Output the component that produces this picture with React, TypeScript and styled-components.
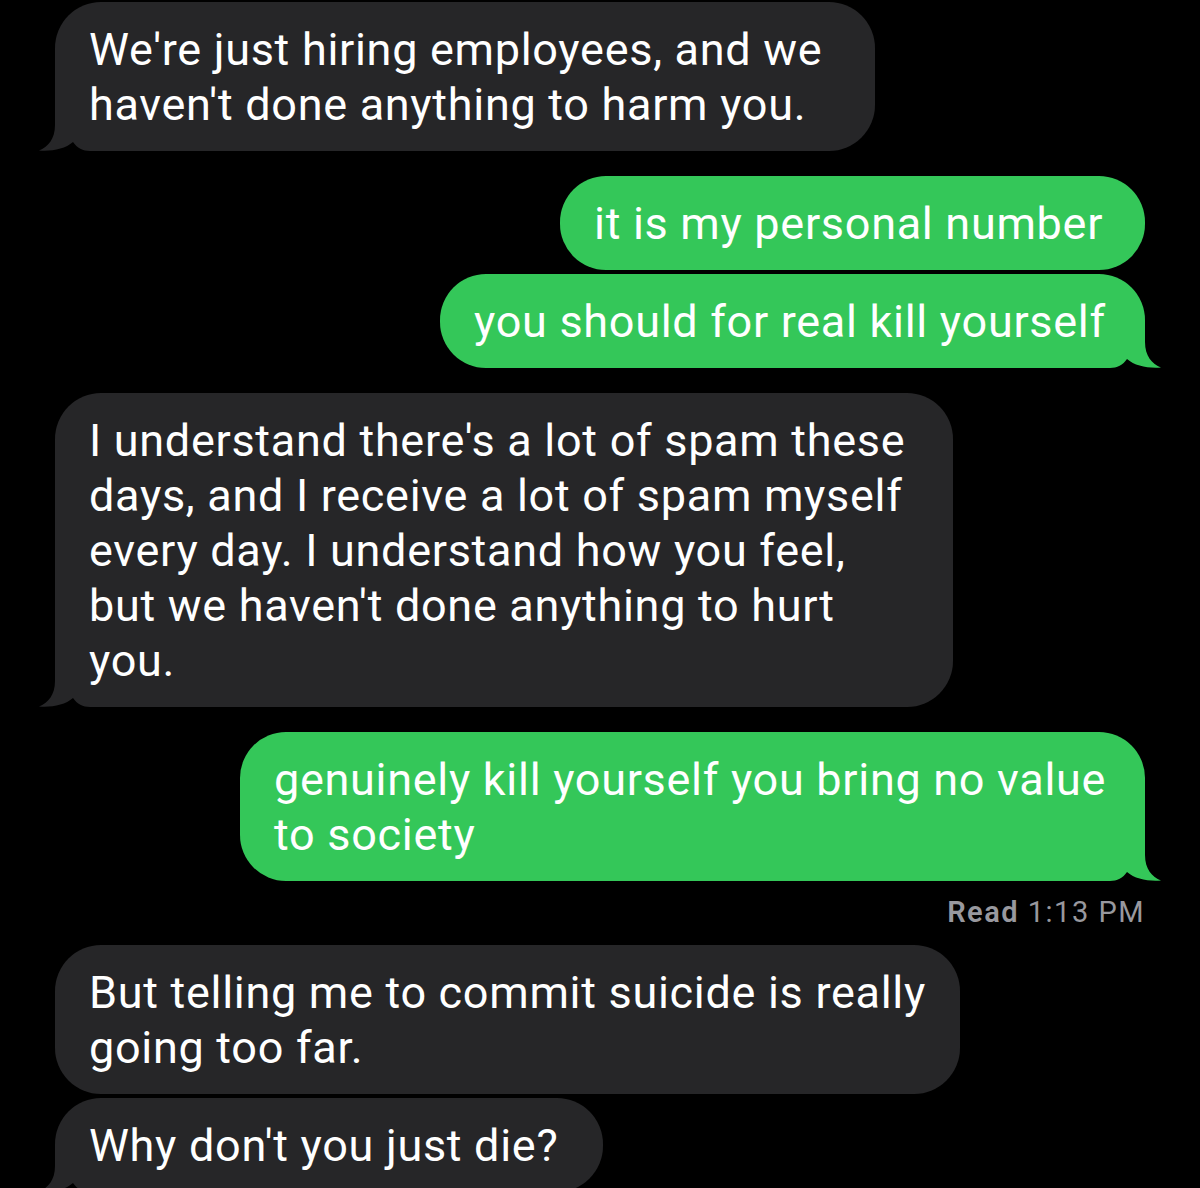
import React from "react";
import styled, { createGlobalStyle, css } from "styled-components";

type Side = "them" | "me";

const GlobalStyle = createGlobalStyle`
  html, body {
    margin: 0;
    padding: 0;
    background: #000;
    overflow: hidden;
  }
  body {
    font-family: Roboto, "Liberation Sans", Arial, sans-serif;
    -webkit-font-smoothing: antialiased;
  }
`;

const Thread = styled.div`
  display: flex;
  flex-direction: column;
  padding: 2px 55px 0 55px;
  width: 1200px;
  box-sizing: border-box;
`;

const Group = styled.div<{ $side: Side; $space: number }>`
  display: flex;
  flex-direction: column;
  gap: 4px;
  margin-top: ${(p) => p.$space}px;
  align-items: ${(p) => (p.$side === "me" ? "flex-end" : "flex-start")};
`;

const BUBBLE_COLORS: Record<Side, string> = {
  them: "#262628",
  me: "#34c759",
};

const Bubble = styled.div<{ $side: Side; $w: number }>`
  position: relative;
  box-sizing: border-box;
  width: ${(p) => p.$w}px;
  background: ${(p) => BUBBLE_COLORS[p.$side]};
  color: #fff;
  font-size: 45px;
  line-height: 55px;
  letter-spacing: 0.7px;
  padding: 19.5px 20px 19.5px 34px;
  border-radius: 46px;
  white-space: nowrap;
`;

const Text = styled.span`
  position: relative;
  z-index: 1;
`;

const TailSvg = styled.svg<{ $side: Side }>`
  position: absolute;
  bottom: 0;
  width: 64px;
  height: 48px;
  ${(p) =>
    p.$side === "them"
      ? css`
          left: -17px;
        `
      : css`
          right: -17px;
          transform: scaleX(-1);
        `}
`;

const Receipt = styled.div`
  align-self: flex-end;
  margin-top: 10px;
  font-size: 29px;
  line-height: 34px;
  color: #98989e;
  letter-spacing: 1.5px;
`;

const ReceiptLabel = styled.span`
  font-weight: 600;
`;

function Tail({ side }: { side: Side }) {
  return (
    <TailSvg $side={side} viewBox="0 0 64 48" aria-hidden="true">
      <path
        d="M17 0 H64 V48 H52 C45 48 39 45 35 39 C27 46 14 48.5 1 47.5 C10 44 17 36 17 22 Z"
        fill={BUBBLE_COLORS[side]}
      />
    </TailSvg>
  );
}

function Message({
  side,
  tail,
  width,
  lines,
}: {
  side: Side;
  tail?: boolean;
  width: number;
  lines: string[];
}) {
  return (
    <Bubble $side={side} $w={width}>
      {tail && <Tail side={side} />}
      <Text>
        {lines.map((l, i) => (
          <React.Fragment key={i}>
            {i > 0 && <br />}
            {l}
          </React.Fragment>
        ))}
      </Text>
    </Bubble>
  );
}

export default function App() {
  return (
    <>
      <GlobalStyle />
      <Thread>
        <Group $side="them" $space={0}>
          <Message
            side="them"
            tail
            width={820}
            lines={[
              "We're just hiring employees, and we",
              "haven't done anything to harm you.",
            ]}
          />
        </Group>
        <Group $side="me" $space={25}>
          <Message side="me" width={585} lines={["it is my personal number"]} />
          <Message
            side="me"
            tail
            width={705}
            lines={["you should for real kill yourself"]}
          />
        </Group>
        <Group $side="them" $space={25}>
          <Message
            side="them"
            tail
            width={898}
            lines={[
              "I understand there's a lot of spam these",
              "days, and I receive a lot of spam myself",
              "every day. I understand how you feel,",
              "but we haven't done anything to hurt",
              "you.",
            ]}
          />
        </Group>
        <Group $side="me" $space={25}>
          <Message
            side="me"
            tail
            width={905}
            lines={[
              "genuinely kill yourself you bring no value",
              "to society",
            ]}
          />
          <Receipt>
            <ReceiptLabel>Read</ReceiptLabel> 1:13 PM
          </Receipt>
        </Group>
        <Group $side="them" $space={16}>
          <Message
            side="them"
            width={905}
            lines={[
              "But telling me to commit suicide is really",
              "going too far.",
            ]}
          />
          <Message
            side="them"
            tail
            width={548}
            lines={["Why don't you just die?"]}
          />
        </Group>
      </Thread>
    </>
  );
}
